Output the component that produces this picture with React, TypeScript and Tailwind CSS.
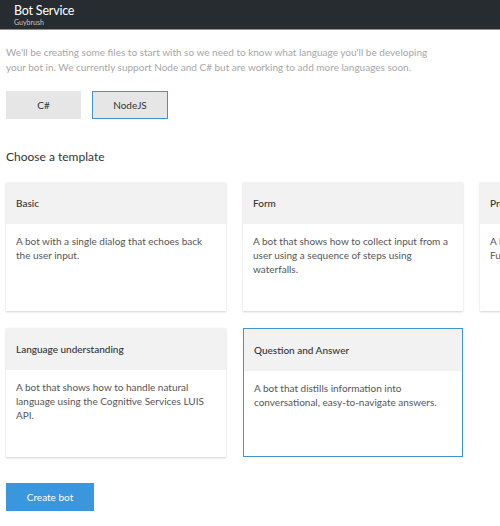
import React from 'react';

type Template = {
  title: string;
  description: string;
  selected?: boolean;
};

const templates: Template[] = [
  { title: 'Basic', description: 'A bot with a single dialog that echoes back the user input.' },
  { title: 'Form', description: 'A bot that shows how to collect input from a user using a sequence of steps using waterfalls.' },
  { title: 'Proactive', description: 'A bot that sends proactive messages using\nFunctions in Azure.' },
  {
    title: 'Language understanding',
    description: 'A bot that shows how to handle natural language using the Cognitive Services LUIS API.',
  },
  {
    title: 'Question and Answer',
    description: 'A bot that distills information into conversational, easy-to-navigate answers.',
    selected: true,
  },
];

const TemplateCard: React.FC<{ t: Template }> = ({ t }) => (
  <div
    className={
      'h-[129px] bg-white flex flex-col ' +
      (t.selected
        ? 'border border-[#3f94d6]'
        : 'shadow-[0_1px_2px_rgba(0,0,0,0.18)]')
    }
  >
    <div className="h-[42px] bg-[#f2f2f2] flex items-center px-[10px] text-[10px] text-[#333] font-medium shrink-0 whitespace-nowrap">
      {t.title}
    </div>
    <div className="px-[10px] pt-[10px] text-[10px] leading-[14px] text-[#555] whitespace-pre-line">{t.description}</div>
  </div>
);

export default function App() {
  const [lang, setLang] = React.useState<'cs' | 'node'>('node');

  return (
    <div className="w-[500px] h-[526px] overflow-hidden bg-white" style={{ fontFamily: 'Lato, "Open Sans", sans-serif' }}>
      {/* Header */}
      <div className="h-[30px] bg-[#272c30] border-b border-[#8f8f8f] px-[14px] pt-[3px]">
        <div className="text-[12.5px] leading-[15px] text-white tracking-[-0.2px]">Bot Service</div>
        <div className="text-[7px] leading-[9px] text-[#c7c7c7]">Guybrush</div>
      </div>

      <div className="px-[6px]">
        <p className="mt-[15px] text-[10px] leading-[15px] text-[#a6a6a6] w-[440px]">
          We'll be creating some files to start with so we need to know what language you'll be developing your bot in.
          We currently support Node and C# but are working to add more languages soon.
        </p>

        <div className="flex gap-[11px] mt-[16px]">
          <button
            type="button"
            onClick={() => setLang('cs')}
            className={
              'w-[75px] h-[28px] text-[10px] text-[#333] bg-[#e6e6e6] ' +
              (lang === 'cs' ? 'border border-[#3f94d6]' : 'border border-transparent')
            }
          >
            C#
          </button>
          <button
            type="button"
            onClick={() => setLang('node')}
            className={
              'w-[76px] h-[28px] text-[10px] text-[#333] bg-[#e6e6e6] ' +
              (lang === 'node' ? 'border border-[#3f94d6]' : 'border border-transparent')
            }
          >
            NodeJS
          </button>
        </div>

        <h2 className="mt-[30px] text-[12px] leading-[16px] text-[#333]">Choose a template</h2>

        <div className="mt-[17px] grid grid-cols-[220px_220px_220px] gap-[17px] w-[694px]">
          {templates.map((t) => (
            <TemplateCard key={t.title} t={t} />
          ))}
        </div>

        <button type="button" className="mt-[26px] w-[88px] h-[28px] bg-[#3a96dd] text-white text-[10px]">
          Create bot
        </button>
      </div>
    </div>
  );
}
